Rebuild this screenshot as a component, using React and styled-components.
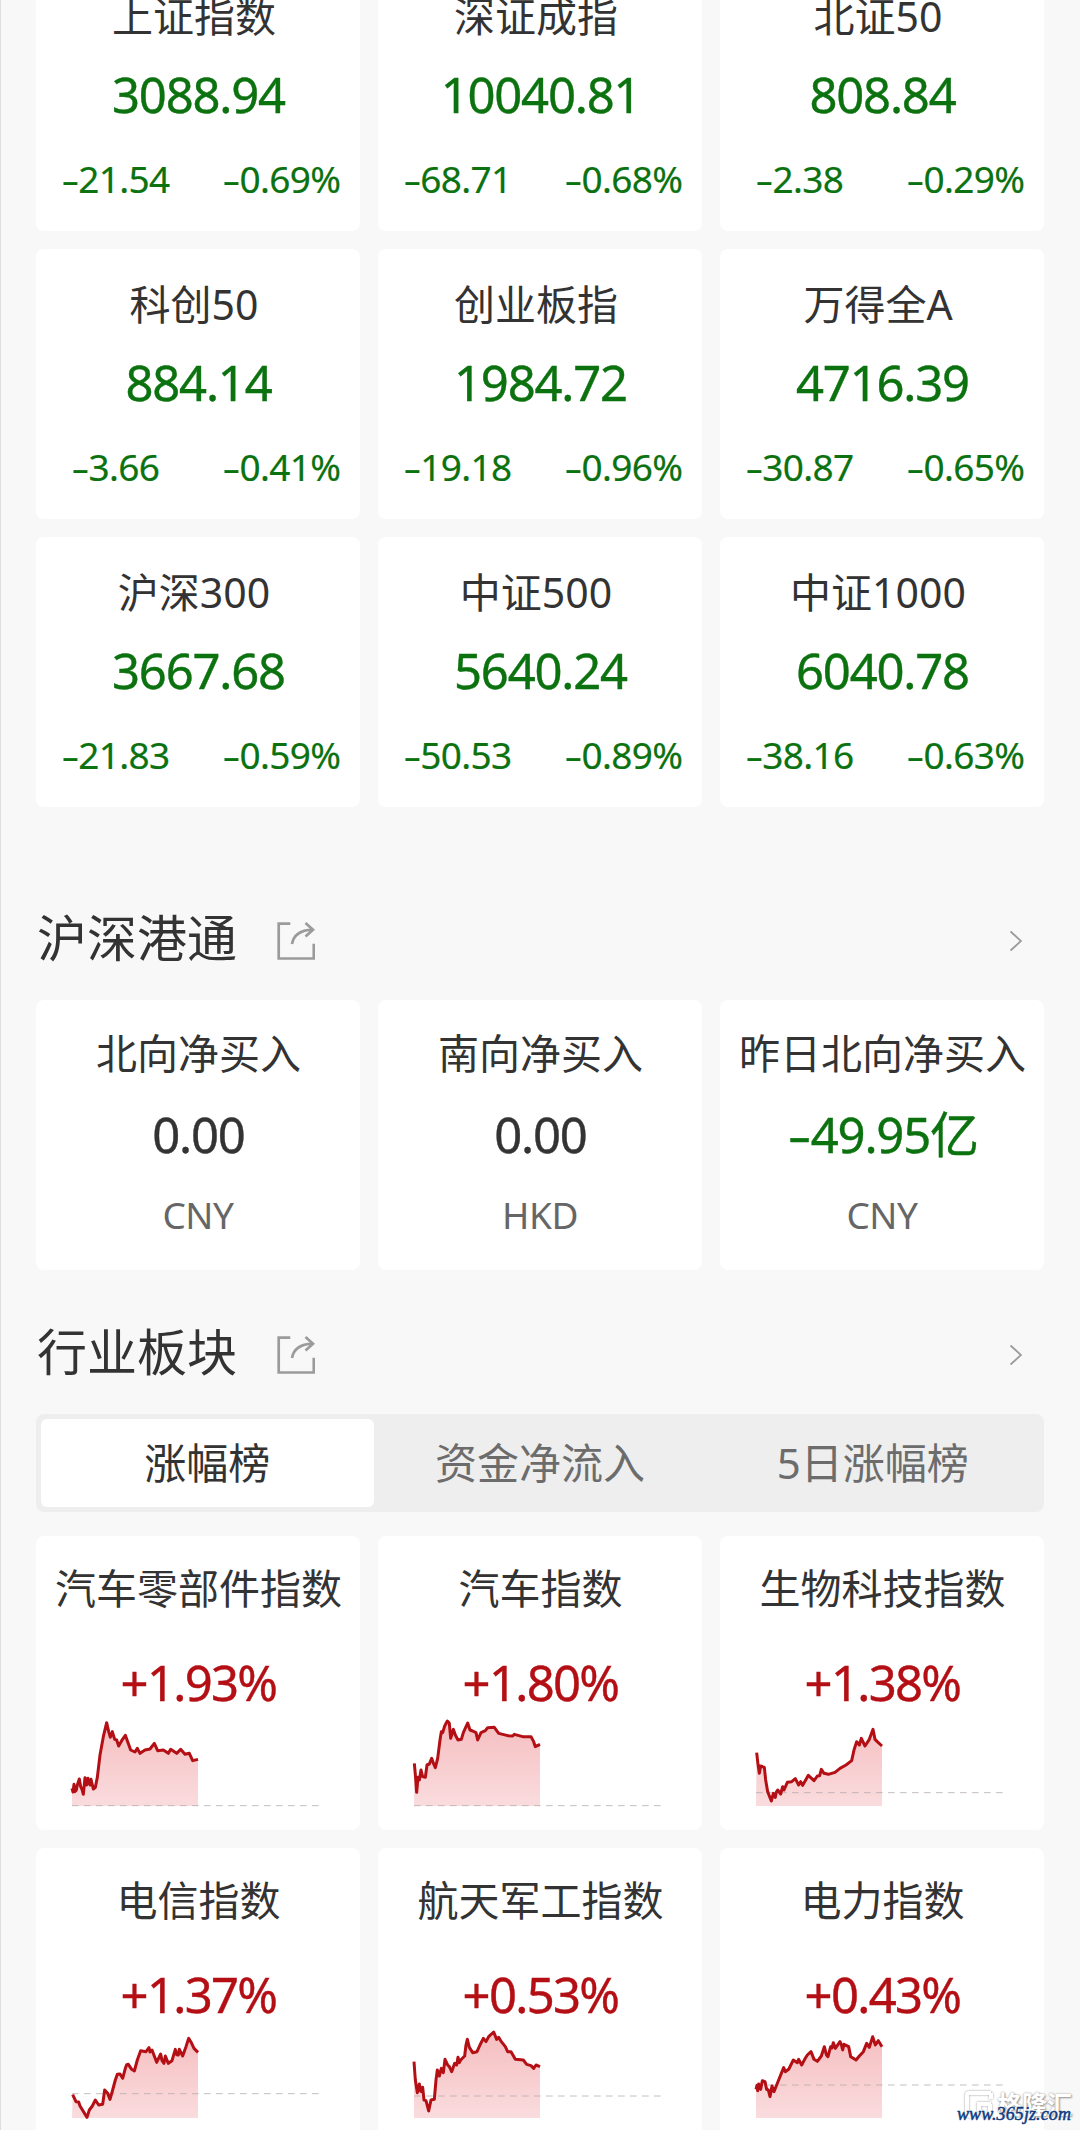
import React from "react";
import styled, { createGlobalStyle } from "styled-components";

const GlobalStyle = createGlobalStyle`
  * {
    box-sizing: border-box;
  }
  body {
    margin: 0;
    background-color: #f8f8f8;
    font-family: "Noto Sans", "Noto Sans CJK SC", sans-serif;
    color: #333;
  }
`;

const colors = {
  up: "#b40f14",
  down: "#0b720f",
  flat: "#333",
};

const Page = styled.main`
  position: relative;
  height: 2130px;
  padding: 0 36px 0 35px;
  overflow: hidden;
  border-left: 1px solid #dedede;
`;

const Grid = styled.div`
  display: grid;
  grid-template-columns: repeat(3, 324px);
  gap: 18px;
`;

const IndexGrid = styled(Grid)`
  margin-top: -39px;
`;

const FlowGrid = styled(Grid)`
  margin-top: 31px;
`;

const Card = styled.div`
  height: ${({ $height }) => $height || 270}px;
  padding-top: ${({ $top }) => $top}px;
  border-radius: 8px;
  background-color: #fff;
  text-align: center;
  white-space: nowrap;
`;

const Label = styled.div`
  padding-right: ${({ $shift }) => $shift || 0}px;
  padding-left: 1px;
  font-size: 41px;
  line-height: 48px;
`;

const Value = styled.div`
  margin-top: ${({ $gap }) => $gap}px;
  padding-left: 1px;
  font-size: 49px;
  line-height: 56px;
  letter-spacing: ${({ $tight }) => ($tight ? -1.7 : -1.2)}px;
  color: ${({ $trend }) => colors[$trend]};
  -webkit-text-stroke: 0.4px ${({ $trend }) => colors[$trend]};
`;

const Changes = styled.div`
  display: grid;
  grid-template-columns: 158px 166px;
  margin-top: 35px;
  font-size: 37px;
  line-height: 44px;
  letter-spacing: -0.7px;
  color: ${colors.down};
  -webkit-text-stroke: 0.2px ${colors.down};

  span:last-child {
    padding-left: 8px;
  }
`;

const Unit = styled.div`
  margin-top: 31px;
  font-size: 37px;
  line-height: 44px;
  letter-spacing: -0.4px;
  color: #666;
`;

const Dash = styled.i`
  display: inline-block;
  width: 0.48em;
  font-style: normal;
  text-align: center;
  transform: scaleX(1.5);
`;

const SectionHead = styled.div`
  display: flex;
  align-items: center;
  height: 60px;
  margin-top: ${({ $top }) => $top}px;
  padding-right: 22px;
`;

const Title = styled.h2`
  margin: -3px 40px 0 1px;
  font-size: 50px;
  font-weight: 400;
  line-height: 60px;
`;

const ShareSvg = styled.svg`
  width: 38px;
  height: 38px;
  margin-top: 4px;
`;

const ArrowSvg = styled.svg`
  width: 13px;
  height: 22px;
  margin-left: auto;
  margin-top: 4px;
`;

const Tabs = styled.div`
  display: flex;
  height: 98px;
  margin: 31px 0 24px;
  padding: 5px;
  border-radius: 8px;
  background-color: #eee;
`;

const Tab = styled.button`
  flex: 1;
  padding: 0 0 1px;
  border: 0;
  border-radius: 6px;
  font: inherit;
  font-size: 42px;
  line-height: 50px;
  color: ${({ $active }) => ($active ? "#333" : "#6c6c6c")};
  background-color: ${({ $active }) => ($active ? "#fff" : "transparent")};
`;

const ChartSvg = styled.svg`
  display: block;
  width: 250px;
  height: 90px;
  margin: 6px 0 0 36px;
  overflow: visible;
`;

const Watermark = styled.div`
  position: absolute;
  right: 7px;
  bottom: 4px;
  width: 118px;
  height: 38px;
`;

const Brand = styled.div`
  display: flex;
  align-items: center;
  gap: 4px;
  margin-left: 9px;
  font-size: 25px;
  font-weight: 700;
  line-height: 32px;
  color: #fff;
  white-space: nowrap;
  text-shadow: 0 0 2px #999, 1px 1px 2px #999;

  svg {
    filter: drop-shadow(0 0 1px #999);
  }
`;

const Site = styled.div`
  position: absolute;
  left: 2px;
  bottom: 1px;
  font-family: "Liberation Serif", serif;
  font-size: 18px;
  font-style: italic;
  line-height: 22px;
  letter-spacing: 0.1px;
  color: #0d3b80;
  -webkit-text-stroke: 0.5px #0d3b80;
  text-shadow: 0 0 2px #fff, 0 0 2px #fff;
`;

const indices = [
  ["上证指数", "3088.94", "-21.54", "-0.69%"],
  ["深证成指", "10040.81", "-68.71", "-0.68%"],
  ["北证50", "808.84", "-2.38", "-0.29%"],
  ["科创50", "884.14", "-3.66", "-0.41%"],
  ["创业板指", "1984.72", "-19.18", "-0.96%"],
  ["万得全A", "4716.39", "-30.87", "-0.65%"],
  ["沪深300", "3667.68", "-21.83", "-0.59%"],
  ["中证500", "5640.24", "-50.53", "-0.89%"],
  ["中证1000", "6040.78", "-38.16", "-0.63%"],
];

const flows = [
  { name: "北向净买入", value: "0.00", unit: "CNY", trend: "flat" },
  { name: "南向净买入", value: "0.00", unit: "HKD", trend: "flat" },
  { name: "昨日北向净买入", value: "-49.95亿", unit: "CNY", trend: "down" },
];

// points are on a 750 x 270 canvas, base is the height of the dashed line
const sectors = [
  {
    name: "汽车零部件指数",
    value: "+1.93%",
    base: 269,
    points:
      "0,217 3,228 6,205 9,227 13,222 16,207 19,198 22,189 26,212 30,220 34,235 39,185 44,207 48,187 51,200 54,207 57,190 64,219 70,214 76,184 84,117 94,62 104,20 110,47 115,64 121,47 128,70 134,72 140,90 149,74 160,58 167,77 176,102 189,108 196,97 204,112 219,102 234,99 247,82 257,104 274,102 289,112 296,100 314,112 326,100 339,115 352,112 362,134 378,130",
  },
  {
    name: "汽车指数",
    value: "+1.80%",
    base: 269,
    points:
      "1,142 5,187 8,229 12,184 16,192 21,162 26,182 34,184 39,147 46,144 53,127 59,144 64,155 71,127 78,72 82,47 86,50 92,30 100,15 106,22 110,67 118,40 124,57 132,72 142,70 148,50 161,21 168,42 176,45 186,50 191,72 201,50 214,44 221,35 241,34 254,52 281,59 296,60 301,55 326,62 351,62 359,77 364,92 378,85",
  },
  {
    name: "生物科技指数",
    value: "+1.38%",
    base: 230,
    points:
      "2,110 6,145 10,172 14,150 25,154 29,192 35,227 46,255 52,232 58,244 61,228 65,222 74,234 80,212 84,222 94,199 107,197 118,188 128,207 134,197 140,208 157,178 174,194 184,180 191,179 196,160 204,172 217,175 237,169 252,157 270,147 287,134 294,102 302,77 310,87 316,67 327,90 340,70 351,40 357,70 367,80 378,90",
  },
  {
    name: "电信指数",
    value: "+1.37%",
    base: 197,
    points:
      "2,200 12,221 20,222 24,234 30,244 45,268 52,246 61,234 70,216 80,231 92,229 98,186 107,196 114,214 122,186 130,156 136,139 144,138 152,151 160,121 164,110 169,109 179,124 187,129 196,96 206,68 222,71 231,59 234,72 240,66 254,103 266,78 270,98 276,106 280,84 289,106 300,98 310,64 314,80 319,81 322,64 332,84 342,56 350,31 359,46 366,61 378,73",
  },
  {
    name: "航天军工指数",
    value: "+0.53%",
    base: 204,
    points:
      "0,101 4,156 10,194 16,168 20,190 23,191 26,178 30,216 36,218 44,249 51,216 61,214 66,156 70,126 76,144 82,121 88,134 93,94 101,111 106,116 113,131 122,106 128,111 132,88 136,104 140,96 152,84 156,51 160,34 166,58 176,74 189,71 198,51 208,31 216,41 224,26 239,12 248,34 254,28 262,41 274,56 281,71 291,71 304,94 328,96 338,109 351,113 359,121 366,111 378,116",
  },
  {
    name: "电力指数",
    value: "+0.43%",
    base: 171,
    points:
      "0,184 3,172 5,188 8,168 14,184 19,158 27,161 32,184 37,186 42,206 48,174 54,191 62,171 68,156 76,136 83,119 88,131 98,124 112,96 124,104 128,94 137,111 146,94 154,81 165,71 174,94 184,100 196,84 205,56 211,80 216,86 224,56 228,60 232,44 238,61 252,41 256,50 260,66 264,49 278,56 284,86 292,91 300,96 310,84 322,71 332,46 340,58 350,26 358,51 367,38 378,56",
  },
];

const tabs = ["涨幅榜", "资金净流入", "5日涨幅榜"];

const Num = ({ children }) =>
  children.startsWith("-") ? (
    <>
      <Dash>-</Dash>
      {children.slice(1)}
    </>
  ) : (
    children
  );

const Section = ({ title, top }) => (
  <SectionHead $top={top}>
    <Title>{title}</Title>
    <ShareSvg viewBox="0 0 38 38" fill="none" stroke="#9b9b9b" strokeWidth="2.7">
      <path d="M13.3 1.7H1.7v34.8h35.1V21.8" />
      <path d="M15 22C16.5 13.5 22 8.3 35.5 7.7M28.5 1l7.5 6.7-7.5 6.8" />
    </ShareSvg>
    <ArrowSvg viewBox="0 0 13 22" fill="none" stroke="#9b9b9b" strokeWidth="1.8">
      <path d="M1.5 1.5L12 11L1.5 20.5" />
    </ArrowSvg>
  </SectionHead>
);

const Chart = ({ points, base }) => (
  <ChartSvg viewBox="0 0 750 270">
    <defs>
      <linearGradient id="fade" x1="0" y1="0" x2="0" y2="270" gradientUnits="userSpaceOnUse">
        <stop offset="0" stopColor="#f5bcbe" />
        <stop offset="1" stopColor="#fadcde" />
      </linearGradient>
    </defs>
    <polygon points={`0,270 ${points} 378,270`} fill="url(#fade)" />
    <line
      x1="0"
      x2="742"
      y1={base}
      y2={base}
      stroke="#b4a8aa"
      strokeOpacity="0.75"
      strokeWidth="3"
      strokeDasharray="20 16"
    />
    <polyline
      points={points}
      fill="none"
      stroke={colors.up}
      strokeWidth="9"
      strokeLinejoin="round"
    />
  </ChartSvg>
);

const App = () => {
  return (
    <>
      <GlobalStyle />
      <Page>
        <IndexGrid>
          {indices.map(([name, value, diff, percent]) => (
            <Card key={name} $top={31}>
              <Label $shift={9}>{name}</Label>
              <Value $gap={26} $trend="down">{value}</Value>
              <Changes>
                <span><Num>{diff}</Num></span>
                <span><Num>{percent}</Num></span>
              </Changes>
            </Card>
          ))}
        </IndexGrid>

        <Section title="沪深港通" top={102} />
        <FlowGrid>
          {flows.map(({ name, value, unit, trend }) => (
            <Card key={name} $top={29}>
              <Label>{name}</Label>
              <Value $gap={29} $trend={trend}><Num>{value}</Num></Value>
              <Unit>{unit}</Unit>
            </Card>
          ))}
        </FlowGrid>

        <Section title="行业板块" top={53} />
        <Tabs>
          {tabs.map((tab, index) => (
            <Tab key={tab} $active={index === 0}>{tab}</Tab>
          ))}
        </Tabs>
        <Grid>
          {sectors.map(({ name, value, base, points }) => (
            <Card key={name} $top={28} $height={294}>
              <Label>{name}</Label>
              <Value $gap={42} $trend="up" $tight>{value}</Value>
              <Chart points={points} base={base} />
            </Card>
          ))}
        </Grid>

        <Watermark>
          <Brand>
            <svg width="29" height="29" viewBox="0 0 29 29" fill="none" stroke="#fff" strokeWidth="4">
              <path d="M27 3H5Q3 3 3 5V23Q3 26 6 26H12M27 3V9M27 14H15V20L21 26H26V14" />
            </svg>
            格隆汇
          </Brand>
          <Site>www.365jz.com</Site>
        </Watermark>
      </Page>
    </>
  );
};

export default App;
